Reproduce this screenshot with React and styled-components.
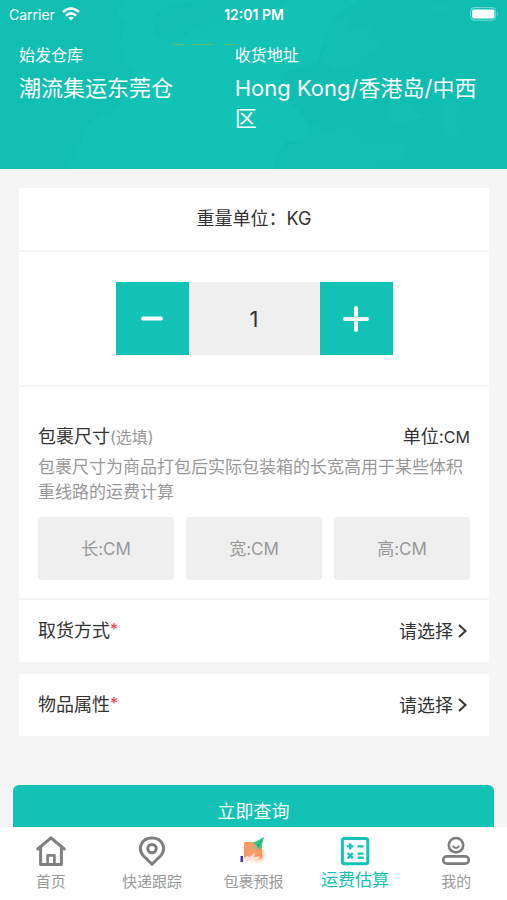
import { useState } from "react";
import styled, { createGlobalStyle } from "styled-components";

const teal = "#12c2b5";
const grey = "#999";

const GlobalStyle = createGlobalStyle`
  * {
    box-sizing: border-box;
  }

  body {
    margin: 0;
    background-color: #f5f5f5;
    color: #333;
    font-family: Inter, "Noto Sans CJK SC", sans-serif;
  }

  button,
  input,
  select {
    margin: 0;
    padding: 0;
    border: 0;
    border-radius: 0;
    outline: 0;
    background: none;
    color: inherit;
    font-family: inherit;
  }
`;

const Page = styled.div`
  height: 100vh;
  display: flex;
  flex-direction: column;
`;

const Content = styled.div`
  flex: 1;
  min-height: 0;
  overflow-y: auto;
  scrollbar-width: none;
`;

const Header = styled.header`
  position: relative;
  padding-bottom: 36px;
  background-color: ${teal};
  color: white;
`;

const MapArt = styled.svg`
  position: absolute;
  inset: 0;
  width: 100%;
  height: 100%;
`;

const StatusBar = styled.div`
  position: relative;
  height: 28px;
  padding: 0 8px 0 9px;
  display: grid;
  grid-template-columns: 1fr auto 1fr;
  align-items: center;
  font-size: 14px;
`;

const Carrier = styled.div`
  display: flex;
  align-items: center;
  gap: 7px;
`;

const Time = styled.div`
  font-weight: 600;
`;

const Battery = styled.svg`
  justify-self: end;
`;

const Route = styled.div`
  position: relative;
  padding: 15px 19px 0;
  display: flex;
`;

const Place = styled.div`
  width: ${(props) => props.$width};
`;

const PlaceLabel = styled.div`
  font-size: 16px;
  line-height: 24px;
`;

const PlaceName = styled.div`
  margin-top: 6px;
  font-size: 22px;
  line-height: 30px;
`;

const Form = styled.form`
  padding: 19px 18px 0 19px;
`;

const Section = styled.section`
  padding: ${(props) => props.$padding || "0 19px"};
  border-bottom: 2px solid #f5f5f5;
  background-color: white;
`;

const WeightUnit = styled.div`
  font-size: 18px;
  line-height: 62px;
  text-align: center;
`;

const Stepper = styled.div`
  height: 73px;
  display: flex;
  justify-content: center;
`;

const StepButton = styled.button`
  width: 73px;
  display: flex;
  justify-content: center;
  align-items: center;
  background-color: ${teal};
  color: white;
`;

const Amount = styled.input`
  width: 131px;
  background-color: #efefef;
  font-size: 22px;
  text-align: center;
`;

const SizeHead = styled.div`
  display: flex;
  justify-content: space-between;
  font-size: 18px;
  line-height: 26px;
`;

const Optional = styled.span`
  color: ${grey};
  font-size: 16px;
`;

const Unit = styled.span`
  font-size: 16px;
`;

const Hint = styled.p`
  margin: 5px 0 12px;
  color: ${grey};
  font-size: 17px;
  line-height: 25px;
`;

const SizeInputs = styled.div`
  display: grid;
  grid-template-columns: repeat(3, 1fr);
  gap: 12px;
`;

const SizeInput = styled.input`
  width: 100%;
  height: 63px;
  border-radius: 4px;
  background-color: #efefef;
  font-size: 17px;
  text-align: center;

  &::placeholder {
    color: ${grey};
    opacity: 1;
  }
`;

const Picker = styled.div`
  height: 62px;
  margin-bottom: 12px;
  padding: 0 22px 0 19px;
  display: flex;
  align-items: center;
  background-color: white;
  font-size: 18px;
  line-height: 28px;
`;

const PickerLabel = styled.label`
  flex: 1;
  display: flex;
`;

const Required = styled.span`
  color: #f5334f;
  font-size: 16px;
  line-height: 24px;
`;

const PickerSelect = styled.select`
  appearance: none;
  margin-right: 5px;
  font-size: 18px;
`;

const SubmitBar = styled.div`
  padding: 37px 13px 13px;
`;

const SubmitButton = styled.button`
  width: 100%;
  height: 50px;
  border-radius: 6px;
  background-color: ${teal};
  color: white;
  font-size: 18px;
`;

const TabBar = styled.nav`
  height: 73px;
  flex-shrink: 0;
  display: flex;
  background-color: white;
`;

const Tab = styled.a`
  flex: 1;
  padding-top: 9px;
  display: flex;
  flex-direction: column;
  align-items: center;
  color: ${(props) => (props.$active ? teal : grey)};
  font-size: ${(props) => (props.$active ? "17px" : "15px")};
  line-height: ${(props) => (props.$active ? "28px" : "32px")};
  text-decoration: none;
  white-space: nowrap;
`;

const TabIcon = styled.svg`
  width: 30px;
  height: 30px;
  flex-shrink: 0;
  fill: none;
  stroke: ${(props) => (props.$active ? teal : "#7f7f7f")};
  stroke-linecap: round;
  stroke-linejoin: round;
`;

const Background = () => (
  <MapArt viewBox="0 0 507 169" preserveAspectRatio="none" aria-hidden="true">
    <g fill="#10bcb0">
      <path d="M0 0H122L118 14L126 24L120 44L128 62L140 74L128 90L118 108L98 118L88 124L80 146L68 169H0Z" opacity=".45" />
      <path d="M152 20L162 8L196 0H290L272 14L240 22L206 24L190 30L180 41H168L154 34Z" opacity=".6" />
      <path d="M336 16L360 0H507V169H274L278 152L286 142L302 140L310 128L298 110L286 98L280 74L318 62L324 36Z" opacity=".8" />
    </g>
    <g fill="#15c3b6" opacity=".4">
      <path d="M320 36L338 18L352 16L346 34L356 30L372 26L368 38L384 44L366 56L352 66L334 70L320 58L328 46Z" />
      <path d="M386 112L392 102L404 106L416 98L412 110L424 116L410 122L392 122Z" />
      <path d="M442 108L450 100L460 106L454 118L460 132L450 140L444 128Z" />
      <path d="M300 140L316 124L326 132L344 126L366 144L392 142L408 146L398 162L380 160L370 169H276L280 152Z" />
      <path d="M430 6L448 2L454 10L440 14Z" />
    </g>
    <path d="M173 44.5H184M192 44.5H214M224 44.5H235" stroke="#5fbd68" strokeWidth="1" />
  </MapArt>
);

const WifiIcon = () => (
  <svg width="18" height="14" viewBox="0 0 18 14" fill="none" stroke="white" strokeWidth="2.6">
    <path d="M1 5Q9 -2 17 5" />
    <path d="M4 8.6Q9 4 14 8.6" />
    <path d="M9 13.5L6.2 10.8Q9 8.5 11.8 10.8Z" fill="white" stroke="none" />
  </svg>
);

const BatteryIcon = () => (
  <Battery width="29" height="14" viewBox="0 0 29 14">
    <rect x=".6" y=".6" width="25" height="12.6" rx="3.6" fill="none" stroke="white" opacity=".45" />
    <rect x="2" y="2.5" width="22.4" height="9" rx="2" fill="white" />
    <path d="M27.2 4.8Q29 7 27.2 9Z" fill="white" opacity=".5" />
  </Battery>
);

const ChevronIcon = () => (
  <svg width="9" height="14" viewBox="0 0 9 14" fill="none" stroke="#333" strokeWidth="2">
    <path d="M1 1L7.6 7L1 13" />
  </svg>
);

const StepIcon = ({ plus }) => (
  <svg width="28" height="28" viewBox="0 0 28 28" stroke="white" strokeWidth="4" strokeLinecap="round">
    {plus ? <path d="M3 14H25M14 3V25" /> : <path d="M5 13.5H23" />}
  </svg>
);

const HomeIcon = () => (
  <TabIcon viewBox="0 0 30 30" strokeWidth="3">
    <path d="M1.8 13L15 1.8L28.2 13" />
    <path d="M4.6 12V28.4H25.4V12" />
    <path d="M11.6 28V19.4H18.4V28" strokeWidth="2.6" />
  </TabIcon>
);

const PinIcon = () => (
  <TabIcon viewBox="0 0 30 30" strokeWidth="3">
    <path d="M15 28.2L6.6 20C.6 13.6 3.4 2 15 2S29.4 13.6 23.4 20Z" />
    <circle cx="15" cy="12.6" r="4.2" />
  </TabIcon>
);

// the hand and the shadow fade out to the right of the box
const ParcelIcon = () => (
  <TabIcon viewBox="0 0 30 30">
    <defs>
      <radialGradient id="parcelGlow">
        <stop offset="0.3" stopColor="#f99a68" stopOpacity="0.8" />
        <stop offset="1" stopColor="#fbc0a0" stopOpacity="0" />
      </radialGradient>
    </defs>
    <g stroke="none">
      <circle cx="19" cy="19" r="9" fill="url(#parcelGlow)" />
      <path d="M5 6H23V22L18 23H5Z" fill="#f99a62" />
      <path d="M4 22L8 20L11 21L15 17L16 18L14.5 21L21 20.5L19 23L14 25.5L4 25Z" fill="#fde3d6" />
      <path d="M1.5 20H4V26H1.5Z" fill="#3f35b0" />
      <path d="M25 1L14 7L17 9L20.5 14L22.5 11Z" fill="#2fd083" />
      <path d="M25 1L17 9L19 12Z" fill="#1fb488" />
      <path d="M11.5 10L17 9L20 13L15 14Z" fill="#c3ad78" />
    </g>
  </TabIcon>
);

const CalculatorIcon = () => (
  <TabIcon viewBox="0 0 30 30" strokeWidth="3" $active>
    <rect x="2.4" y="2.4" width="25.4" height="25.4" rx="2" />
    <g strokeWidth="2.4" strokeLinecap="butt">
      <path d="M7 10.4H13.4M10.2 7.2V13.6M17.6 10.4H23.6" />
      <path d="M7.6 17L12.8 22.4M12.8 17L7.6 22.4M17.6 17.6H23.6M17.6 21.8H23.6" />
    </g>
  </TabIcon>
);

const MineIcon = () => (
  <TabIcon viewBox="0 0 30 30" strokeWidth="2.6">
    <circle cx="15" cy="9.2" r="7.2" />
    <path d="M12.2 10.4Q15 13.6 17.8 10.4" strokeWidth="2" />
    <rect x="2.2" y="20.4" width="25.6" height="7.2" rx="3.6" />
  </TabIcon>
);

const tabs = [
  { name: "首页", Icon: HomeIcon },
  { name: "快递跟踪", Icon: PinIcon },
  { name: "包裹预报", Icon: ParcelIcon },
  { name: "运费估算", Icon: CalculatorIcon, active: true },
  { name: "我的", Icon: MineIcon },
];

const SelectRow = ({ id, label }) => (
  <Picker>
    <PickerLabel htmlFor={id}>
      {label}
      <Required>*</Required>
    </PickerLabel>
    <PickerSelect id={id}>
      <option>请选择</option>
    </PickerSelect>
    <ChevronIcon />
  </Picker>
);

export default function App() {
  const [weight, setWeight] = useState(1);

  return (
    <Page>
      <GlobalStyle />
      <Content>
        <Header>
          <Background />
          <StatusBar>
            <Carrier>
              Carrier
              <WifiIcon />
            </Carrier>
            <Time>12:01 PM</Time>
            <BatteryIcon />
          </StatusBar>
          <Route>
            <Place $width="46%">
              <PlaceLabel>始发仓库</PlaceLabel>
              <PlaceName>潮流集运东莞仓</PlaceName>
            </Place>
            <Place $width="54%">
              <PlaceLabel>收货地址</PlaceLabel>
              <PlaceName>Hong Kong/香港岛/中西区</PlaceName>
            </Place>
          </Route>
        </Header>

        <Form id="estimate" onSubmit={(e) => e.preventDefault()}>
          <Section>
            <WeightUnit>重量单位：KG</WeightUnit>
          </Section>
          <Section $padding="30px 19px">
            <Stepper>
              <StepButton
                type="button"
                aria-label="减少"
                onClick={() => setWeight(Math.max(1, Number(weight) - 1))}
              >
                <StepIcon />
              </StepButton>
              <Amount
                aria-label="重量"
                inputMode="decimal"
                value={weight}
                onChange={(e) => setWeight(e.target.value)}
              />
              <StepButton
                type="button"
                aria-label="增加"
                onClick={() => setWeight(Number(weight) + 1)}
              >
                <StepIcon plus />
              </StepButton>
            </Stepper>
          </Section>
          <Section $padding="37px 19px 18px">
            <SizeHead>
              <div>
                包裹尺寸<Optional>(选填)</Optional>
              </div>
              <div>
                单位:<Unit>CM</Unit>
              </div>
            </SizeHead>
            <Hint>包裹尺寸为商品打包后实际包装箱的长宽高用于某些体积重线路的运费计算</Hint>
            <SizeInputs>
              <SizeInput aria-label="长" placeholder="长:CM" />
              <SizeInput aria-label="宽" placeholder="宽:CM" />
              <SizeInput aria-label="高" placeholder="高:CM" />
            </SizeInputs>
          </Section>
          <SelectRow id="pickup" label="取货方式" />
          <SelectRow id="goods" label="物品属性" />
        </Form>
        <SubmitBar>
          <SubmitButton type="submit" form="estimate">
            立即查询
          </SubmitButton>
        </SubmitBar>
      </Content>

      <TabBar>
        {tabs.map(({ name, Icon, active }) => (
          <Tab key={name} href="#" $active={active}>
            <Icon />
            {name}
          </Tab>
        ))}
      </TabBar>
    </Page>
  );
}
